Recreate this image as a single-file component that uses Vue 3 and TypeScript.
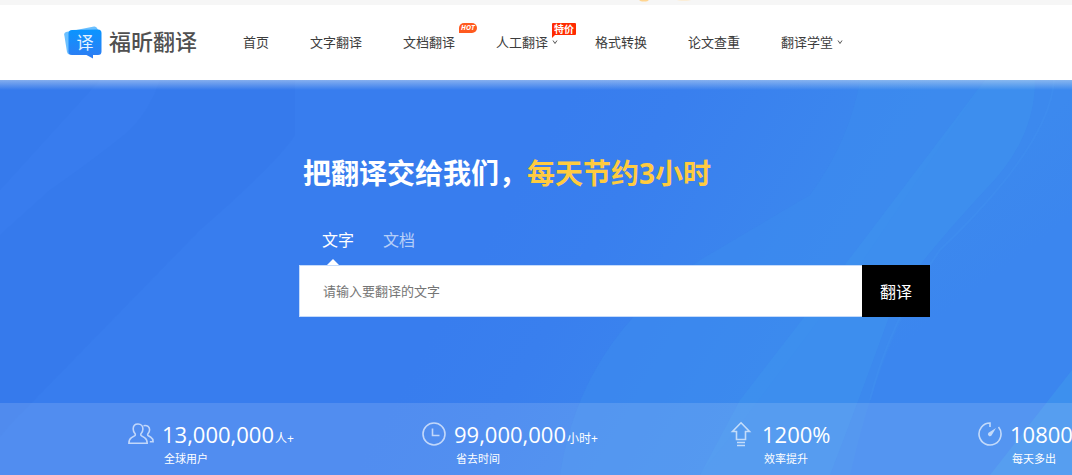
<script setup lang="ts">
import { ref } from 'vue'

interface NavItem {
  label: string
  menu?: boolean
  badge?: 'hot' | 'deal'
}

interface Stat {
  icon: 'users' | 'clock' | 'up' | 'gauge'
  value: string
  unit: string
  label: string
}

const nav: NavItem[] = [
  { label: '首页' },
  { label: '文字翻译' },
  { label: '文档翻译', badge: 'hot' },
  { label: '人工翻译', menu: true, badge: 'deal' },
  { label: '格式转换' },
  { label: '论文查重' },
  { label: '翻译学堂', menu: true },
]

const stats: Stat[] = [
  { icon: 'users', value: '13,000,000', unit: '人+', label: '全球用户' },
  { icon: 'clock', value: '99,000,000', unit: '小时+', label: '省去时间' },
  { icon: 'up', value: '1200%', unit: '', label: '效率提升' },
  { icon: 'gauge', value: '10800', unit: '', label: '每天多出' },
]

const tabs = ['文字', '文档']
const active = ref(0)
const query = ref('')
</script>

<template>
  <div class="page">
    <div class="strip">
      <svg class="strip-art" viewBox="0 0 60 5" aria-hidden="true">
        <ellipse cx="12" cy="-1" rx="5" ry="2.500" fill="#ffd591" />
        <ellipse cx="52" cy="-1" rx="8" ry="2" fill="#fbeed8" />
      </svg>
    </div>
    <header class="header">
      <a class="logo" href="#">
        <svg class="logo-mark" viewBox="0 0 38 33" aria-hidden="true">
          <defs>
            <linearGradient id="mark" x1="0" y1="0" x2="0" y2="1">
              <stop offset="0" stop-color="#0a95ff" />
              <stop offset="1" stop-color="#2f7cf3" />
            </linearGradient>
          </defs>
          <path d="M2 6 30 .6q2-.3 3 1.500L35 6 30 27 6 28.500Q3.500 28.500 3 26L.2 8.500Q0 6.500 2 6Z" fill="#6cc0ff" />
          <path d="M8 4 34 3.500q3.500 0 3.500 3.500V25.500q0 3.500-3.500 3.500H29V32.500L22.500 29H8q-3.500 0-3.500-3.500V7.500Q4.500 4 8 4Z" fill="url(#mark)" />
          <text x="21" y="22.500" text-anchor="middle" class="mark-text">译</text>
        </svg>
        <span class="logo-name">福昕翻译</span>
      </a>
      <nav class="nav">
        <a v-for="item in nav" :key="item.label" class="nav-link" href="#">
          {{ item.label }}
          <svg v-if="item.menu" class="chevron" viewBox="0 0 6 6" aria-hidden="true">
            <path d="M1 1.500 3 4.500 5 1.500" />
          </svg>
          <span v-if="item.badge === 'hot'" class="badge hot">HOT</span>
          <span v-if="item.badge === 'deal'" class="badge deal">特价</span>
        </a>
      </nav>
    </header>

    <main class="hero">
      <svg class="backdrop" viewBox="0 0 1072 395" preserveAspectRatio="none" aria-hidden="true">
        <defs>
          <linearGradient id="sky" gradientUnits="userSpaceOnUse" x1="520" y1="100" x2="800" y2="260">
            <stop offset="0" stop-color="#387dee" />
            <stop offset=".3" stop-color="#397fee" />
            <stop offset="1" stop-color="#3c89ee" />
          </linearGradient>
          <linearGradient id="calm" gradientUnits="userSpaceOnUse" x1="930" y1="120" x2="990" y2="200">
            <stop offset="0" stop-color="#3b86ee" stop-opacity="0" />
            <stop offset="1" stop-color="#3b86ef" />
          </linearGradient>
        </defs>
        <rect width="1072" height="395" fill="url(#sky)" />
        <path d="M0 0H295V55Q280 80 200 150L10 345 0 357Z" fill="#3679eb" opacity=".7" />
        <path d="M100 0H160Q150 30 130 50 100 75 50 110L0 155V110Z" fill="#387cee" />
        <path d="M860 0H985L860 185 740 345 700 395H560Q580 260 700 180L810 115Q850 60 860 0Z" fill="#3c8bee" opacity=".5" />
        <path d="M1050 0H1072V395H850Q880 260 940 170 1030 90 1050 0Z" fill="url(#calm)" />
        <path d="M985 0H1035Q1035 60 985 110 920 180 895 220 870 290 830 395H700L740 320 860 165Z" fill="#3e90ee" opacity=".75" />
        <path d="M1054 0Q1050 65 940 170 890 240 870 320" fill="none" stroke="#4292ef" stroke-width="2" opacity=".4" />
        <path d="M1072 290V395H990Z" fill="#3e92ee" opacity=".8" />
      </svg>

      <section class="content">
        <h1 class="title">把翻译交给我们，<em>每天节约3小时</em></h1>
        <div class="tabs" role="tablist">
          <button
            v-for="(tab, i) in tabs"
            :key="tab"
            type="button"
            role="tab"
            class="tab"
            :class="{ active: active === i }"
            :aria-selected="active === i"
            @click="active = i"
          >
            {{ tab }}
          </button>
        </div>
        <form class="search" @submit.prevent>
          <input v-model="query" class="field" type="text" aria-label="请输入要翻译的文字" placeholder="请输入要翻译的文字" />
          <button class="submit" type="submit">翻译</button>
        </form>
      </section>

      <section class="stats">
        <div v-for="stat in stats" :key="stat.label" class="stat">
          <svg v-if="stat.icon === 'users'" class="icon" viewBox="0 0 26 26" aria-hidden="true">
            <path d="M10 3C6.800 3 5.200 5.200 5.200 8c0 2.200.8 3.600 1.900 4.800.5.700.2 1.600-.6 2.100L3.500 16.600C1.500 17.800.9 19.500.9 22.200H19.200c0-2.700-.7-4.400-2.700-5.600L13.600 14.900c-.8-.5-1.100-1.400-.6-2.100C14.100 11.600 14.900 10.200 14.900 8c0-2.800-1.600-5-4.900-5Z" />
            <path d="M15.500 4.700c4-.8 6.100 1.300 6.100 4.100 0 1.800-.7 3-1.700 4.100-.5.700-.3 1.400.5 1.900l2.400 1.400c1.700 1 2.300 2.400 2.300 4.500h-3.300" />
          </svg>
          <svg v-else-if="stat.icon === 'clock'" class="icon" viewBox="0 0 26 26" aria-hidden="true">
            <circle cx="14" cy="13" r="11" />
            <path d="M12.500 7.500V14.500H19.500" />
          </svg>
          <svg v-else-if="stat.icon === 'up'" class="icon" viewBox="0 0 26 26" aria-hidden="true">
            <path d="M13 1.800 21.500 10.500H17.500V18.500H8.500V10.500H4.500Z" />
            <path d="M9 21.500H17M9 24.500H17" />
          </svg>
          <svg v-else class="icon" viewBox="0 0 26 26" aria-hidden="true">
            <path d="M14 6V2A11 11 0 1 0 22.500 6" />
            <path d="M20 7 15.500 14.500A2 2 0 1 1 12.500 11.800Z" class="needle" />
          </svg>
          <div>
            <div class="figure">{{ stat.value }}<span v-if="stat.unit" class="unit">{{ stat.unit }}</span></div>
            <div class="caption">{{ stat.label }}</div>
          </div>
        </div>
      </section>
    </main>
  </div>
</template>

<style>
body {
  margin: 0;
}
</style>

<style scoped>
.page {
  font-family: "Open Sans", "Noto Sans CJK SC", sans-serif;
  overflow: hidden;
  background: #fff;
}

.strip {
  height: 5px;
  padding-left: 59%;
  background: #f6f6f6;
}

.strip-art {
  display: block;
  width: 60px;
  height: 5px;
}

.header {
  display: flex;
  align-items: center;
  height: 75px;
  padding-left: 64px;
}

.logo {
  display: flex;
  align-items: center;
  gap: 7px;
  width: 179px;
  text-decoration: none;
}

.logo-mark {
  width: 38px;
  height: 33px;
}

.mark-text {
  font-size: 17px;
  fill: #e4f3ff;
}

.logo-name {
  padding-bottom: 4px;
  font-size: 22px;
  line-height: 32px;
  font-weight: 500;
  color: #505050;
}

.nav {
  display: flex;
  gap: 41px;
  padding-bottom: 2px;
}

.nav-link {
  position: relative;
  display: flex;
  align-items: center;
  font-size: 13px;
  line-height: 20px;
  color: #3c3c3c;
  text-decoration: none;
  white-space: nowrap;
}

.chevron {
  width: 6px;
  height: 6px;
  margin: 0 -4px 0 4px;
  fill: none;
  stroke: #555;
  stroke-width: 1;
}

.badge {
  position: absolute;
  color: #fff;
  font-weight: 700;
}

.hot {
  left: 56px;
  top: -9px;
  padding: 0 2px;
  border-radius: 5px 5px 5px 0;
  background: #ff5a1f;
  font-size: 7px;
  line-height: 10px;
  font-style: italic;
}

.deal {
  left: 56px;
  top: -9px;
  padding: 0 2px;
  border-radius: 1px;
  background: #ff2a00;
  font-size: 10px;
  line-height: 12px;
}

.deal::after {
  content: "";
  position: absolute;
  left: 0;
  top: 11px;
  border-top: 4px solid #ff2a00;
  border-right: 4px solid transparent;
}

.hero {
  position: relative;
  isolation: isolate;
  background: #387dee;
}

.hero::before {
  content: "";
  position: absolute;
  inset: 0 0 auto;
  height: 10px;
  background: linear-gradient(rgba(210, 225, 240, 0.5), rgba(210, 225, 240, 0));
}

.backdrop {
  position: absolute;
  inset: 0;
  z-index: -1;
  width: 100%;
  height: 100%;
}

.content {
  display: grid;
  grid-template-columns: 299fr 631fr 142fr;
  padding: 73px 0 86px;
}

.content > * {
  grid-column: 2;
}

.title {
  margin: 0;
  padding-left: 4px;
  font-size: 28px;
  line-height: 40px;
  font-weight: 700;
  color: #fff;
  white-space: nowrap;
}

.title em {
  font-style: normal;
  color: #ffcb3f;
}

.tabs {
  display: flex;
  gap: 29px;
  margin-top: 35px;
  padding-left: 23px;
}

.tab {
  position: relative;
  padding: 0 0 13px;
  border: 0;
  background: none;
  font: inherit;
  font-size: 16px;
  line-height: 24px;
  color: rgba(255, 255, 255, 0.65);
  cursor: pointer;
}

.tab.active {
  color: #fff;
}

.tab.active::after {
  content: "";
  position: absolute;
  left: 5px;
  bottom: 0;
  border: 6px solid transparent;
  border-top: 0;
  border-bottom-color: #fff;
}

.search {
  display: flex;
  height: 52px;
}

.field {
  flex: 1;
  min-width: 0;
  box-sizing: border-box;
  padding: 0 23px;
  border: 1px solid #c5dbfb;
  border-right: 0;
  border-radius: 0;
  outline: 0;
  background: #fff;
  font: inherit;
  font-size: 13px;
  color: #333;
}

.field::placeholder {
  color: #757575;
  opacity: 1;
}

.submit {
  width: 68px;
  padding: 0;
  border: 0;
  background: #000;
  font: inherit;
  font-size: 16px;
  color: #fff;
  cursor: pointer;
}

.stats {
  display: grid;
  grid-template-columns: 292fr 308fr 248fr 96fr;
  padding: 15px 0 8px 128px;
  background: rgba(255, 255, 255, 0.13);
}

.stat {
  display: flex;
  gap: 8px;
  min-width: 0;
  color: #fff;
  white-space: nowrap;
}

.icon {
  flex: none;
  width: 26px;
  height: 26px;
  margin-top: 3px;
  fill: none;
  stroke: rgba(255, 255, 255, 0.65);
  stroke-width: 1.6;
}

.needle {
  fill: rgba(255, 255, 255, 0.65);
  stroke: none;
}

.figure {
  display: flex;
  align-items: baseline;
  height: 33px;
  font-size: 22px;
  line-height: 32px;
}

.unit {
  margin-left: 1px;
  font-size: 12px;
  line-height: 16px;
}

.caption {
  padding-left: 2px;
  font-size: 11px;
  line-height: 16px;
}
</style>
